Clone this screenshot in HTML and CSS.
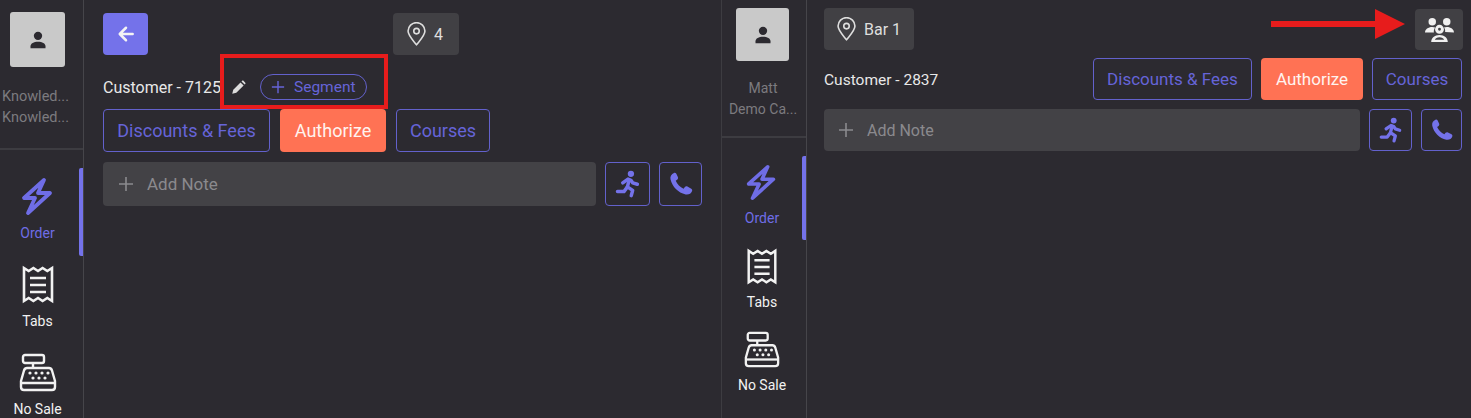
FILE: index.html
```html
<!DOCTYPE html>
<html lang="en">
<head>
    <meta charset="UTF-8">
    <meta name="viewport" content="width=device-width, initial-scale=1.0">
    <title>Order Screens</title>
    <link rel="stylesheet" href="styles.css">
</head>
<body>
    <svg class="icon-defs" aria-hidden="true">
        <symbol id="i-person" viewBox="0 0 24 24">
            <circle cx="12" cy="7" r="5"/>
            <path d="M3 22v-2.500c0-3.500 4-5.500 9-5.500s9 2 9 5.500V22z"/>
        </symbol>
        <symbol id="i-bolt" viewBox="0 0 40 40">
            <path d="M26 3 6 21h11l-7 15 22-20H20z" fill="none" stroke="currentColor" stroke-width="3.800" stroke-linejoin="round"/>
        </symbol>
        <symbol id="i-receipt" viewBox="0 0 40 40">
            <g fill="none" stroke="currentColor" stroke-width="2.600">
                <path d="M6 3v33l4.700-3 4.700 3 4.600-3 4.600 3 4.700-3 4.700 3V3l-4.700 3-4.700-3-4.600 3-4.600-3-4.700 3z"/>
                <path d="M12 13h16M12 20h16M12 27h16"/>
            </g>
        </symbol>
        <symbol id="i-register" viewBox="0 0 40 40">
            <g fill="none" stroke="currentColor" stroke-width="2.400" stroke-linejoin="round">
                <rect x="5" y="2" width="21" height="8" rx="2"/>
                <path d="M15 10v5"/>
                <path d="M9 15h22c1.500 0 2.500 1 3 2.500L37 28v6c0 2-1 3-3 3H6c-2 0-3-1-3-3v-6L6 17.500C6.500 16 7.500 15 9 15z"/>
                <path d="M3.500 30h33"/>
            </g>
            <g>
                <circle cx="12" cy="20" r="1.600"/><circle cx="18" cy="20" r="1.600"/><circle cx="24" cy="20" r="1.600"/><circle cx="30" cy="20" r="1.600"/>
                <circle cx="15" cy="25" r="1.600"/><circle cx="21" cy="25" r="1.600"/><circle cx="27" cy="25" r="1.600"/>
            </g>
        </symbol>
        <symbol id="i-back" viewBox="0 0 24 24">
            <path d="M20 12H5M12 4.500 4.500 12l7.500 7.500" fill="none" stroke="currentColor" stroke-width="3" stroke-linecap="round" stroke-linejoin="round"/>
        </symbol>
        <symbol id="i-pin" viewBox="3 1 18 22.500">
            <g fill="none" stroke="currentColor" stroke-width="1.500">
                <path d="M12 22.500C8 17.500 4 13.500 4 9.500a8 8 0 0 1 16 0c0 4-4 8-8 13z" stroke-linejoin="round"/>
                <circle cx="12" cy="9.500" r="2.600"/>
            </g>
        </symbol>
        <symbol id="i-pencil" viewBox="0 0 24 24">
            <path d="M2 22l1.600-6.500L15.200 3.900l5 5L8.500 20.400zM16.800 2.300l1-1c.7-.6 1.500-.6 2.100 0l2.900 2.900c.6.600.6 1.400 0 2.100l-1 1z"/>
        </symbol>
        <symbol id="i-plus" viewBox="0 0 16 16">
            <path d="M8 1v14M1 8h14" fill="none" stroke="currentColor" stroke-width="1.600"/>
        </symbol>
        <symbol id="i-run" viewBox="0 0 24 24">
            <circle cx="14.500" cy="3.300" r="2.700"/>
            <g fill="none" stroke="currentColor" stroke-width="3" stroke-linecap="round" stroke-linejoin="round">
                <path d="M7.500 11 12 7.800l2.500 1L16 11l4 1.200"/>
                <path d="M13 8.500l-1.500 6L16 17.500 14.800 22"/>
                <path d="M11.500 14.500 8.500 18.500H3"/>
            </g>
        </symbol>
        <symbol id="i-phone" viewBox="0 0 24 24">
            <path d="M6 2.500c-2.200.8-3.500 3-3 5.500 1.500 6.500 6.500 11.500 13 13 2.500.5 4.700-.8 5.500-3 .3-.8 0-1.600-.7-2l-3.300-1.800c-.8-.4-1.600-.2-2.200.4l-1.100 1.400c-3-1.300-5.400-3.700-6.700-6.700l1.400-1.100c.6-.6.8-1.400.4-2.200L8 3.200C7.600 2.500 6.800 2.200 6 2.500z"/>
        </symbol>
        <symbol id="i-people" viewBox="0 0 28 24">
            <circle cx="7" cy="4.600" r="3.600"/>
            <circle cx="21" cy="4.600" r="3.600"/>
            <path d="M0 15c0-3.300 3-5.500 7-5.500 1 0 1.900.2 2.700.5C8.600 11.800 8.300 13.500 8.600 15z"/>
            <path d="M28 15c0-3.300-3-5.500-7-5.500-1 0-1.900.2-2.700.5 1.100 1.300 1.400 3 1.100 4.500z"/>
            <path d="M14 7.500a4.300 4.300 0 1 1 0 8.600 4.300 4.300 0 0 1 0-8.600zm0 2.900a1.400 1.400 0 1 0 0 2.800 1.400 1.400 0 0 0 0-2.800z" fill-rule="evenodd"/>
            <path d="M6 24c0-4 3.200-6.800 8-6.800s8 2.800 8 6.800zm3.500-2h9c-.6-1.500-2.300-2.500-4.500-2.500s-3.900 1-4.500 2.500z" fill-rule="evenodd"/>
        </symbol>
    </svg>

    <div class="screen">
        <section class="panel panel-left">
            <aside class="sidebar">
                <div class="profile">
                    <div class="avatar"><svg class="avatar-icon"><use href="#i-person"/></svg></div>
                    <div class="staff">
                        <p>Knowled...</p>
                        <p>Knowled...</p>
                    </div>
                </div>
                <nav class="nav">
                    <a class="nav-item active"><svg class="nav-icon"><use href="#i-bolt"/></svg><span>Order</span></a>
                    <a class="nav-item"><svg class="nav-icon"><use href="#i-receipt"/></svg><span>Tabs</span></a>
                    <a class="nav-item"><svg class="nav-icon"><use href="#i-register"/></svg><span>No Sale</span></a>
                </nav>
            </aside>
            <main class="main">
                <div class="top-row">
                    <button class="back-btn"><svg class="back-icon"><use href="#i-back"/></svg></button>
                    <div class="chip chip-table"><svg class="pin-icon"><use href="#i-pin"/></svg><span>4</span></div>
                </div>
                <div class="customer-row">
                    <span class="customer">Customer - 7125</span>
                    <svg class="pencil-icon"><use href="#i-pencil"/></svg>
                    <button class="segment-btn"><svg class="segment-plus"><use href="#i-plus"/></svg>Segment</button>
                </div>
                <div class="actions">
                    <button class="btn outline btn-discounts">Discounts &amp; Fees</button>
                    <button class="btn solid btn-authorize">Authorize</button>
                    <button class="btn outline btn-courses">Courses</button>
                </div>
                <div class="note-row">
                    <div class="note"><svg class="note-plus"><use href="#i-plus"/></svg>Add Note</div>
                    <button class="btn outline square square-run"><svg class="square-icon"><use href="#i-run"/></svg></button>
                    <button class="btn outline square square-phone"><svg class="square-icon"><use href="#i-phone"/></svg></button>
                </div>
            </main>
            <div class="callout-box"></div>
        </section>

        <section class="panel panel-right">
            <aside class="sidebar">
                <div class="profile">
                    <div class="avatar"><svg class="avatar-icon"><use href="#i-person"/></svg></div>
                    <div class="staff">
                        <p>Matt</p>
                        <p>Demo Ca...</p>
                    </div>
                </div>
                <nav class="nav">
                    <a class="nav-item active"><svg class="nav-icon"><use href="#i-bolt"/></svg><span>Order</span></a>
                    <a class="nav-item"><svg class="nav-icon"><use href="#i-receipt"/></svg><span>Tabs</span></a>
                    <a class="nav-item"><svg class="nav-icon"><use href="#i-register"/></svg><span>No Sale</span></a>
                </nav>
            </aside>
            <main class="main">
                <div class="top-row top-row-split">
                    <div class="chip chip-bar"><svg class="pin-icon"><use href="#i-pin"/></svg><span>Bar 1</span></div>
                    <button class="chip people-btn"><svg class="people-icon"><use href="#i-people"/></svg></button>
                </div>
                <div class="customer-actions">
                    <span class="customer">Customer - 2837</span>
                    <div class="actions">
                        <button class="btn outline btn-discounts">Discounts &amp; Fees</button>
                        <button class="btn solid btn-authorize">Authorize</button>
                        <button class="btn outline btn-courses">Courses</button>
                    </div>
                </div>
                <div class="note-row">
                    <div class="note"><svg class="note-plus"><use href="#i-plus"/></svg>Add Note</div>
                    <button class="btn outline square square-run"><svg class="square-icon"><use href="#i-run"/></svg></button>
                    <button class="btn outline square square-phone"><svg class="square-icon"><use href="#i-phone"/></svg></button>
                </div>
            </main>
            <svg class="callout-arrow" viewBox="0 0 134 30"><path d="M0 12h104V0l30 15-30 15V18H0z"/></svg>
        </section>
    </div>
</body>
</html>
```

FILE: styles.css
```css
* {
    margin: 0;
    padding: 0;
    box-sizing: border-box;
}

body {
    font-family: 'Roboto', 'Liberation Sans', sans-serif;
    background-color: #2c2a30;
    color: #e6e6e6;
    height: 418px;
    overflow: hidden;
}

button {
    font-family: inherit;
    background: none;
    border: none;
}

svg {
    display: block;
    fill: currentColor;
}

.icon-defs {
    width: 0;
    height: 0;
    position: absolute;
}

.screen {
    display: flex;
    height: 418px;
}

.panel {
    display: flex;
    position: relative;
    height: 418px;
    overflow: hidden;
}

.panel-left {
    width: 722px;
    border-right: 1px solid #3d3c41;
}

.panel-right {
    width: 749px;
}

/* sidebar */
.sidebar {
    flex: none;
    border-right: 1px solid #46454a;
    overflow: hidden;
}

.profile {
    border-bottom: 2px solid #3d3c41;
}

.avatar {
    display: flex;
    align-items: center;
    justify-content: center;
    background-color: #c9c9c9;
    border-radius: 3px;
    color: #2c2a30;
}

.avatar-icon {
    width: 20px;
    height: 20px;
}

.staff {
    color: #7c7b7f;
    text-align: center;
    font-size: 14px;
    line-height: 21px;
    white-space: nowrap;
}

.nav-item {
    display: flex;
    flex-direction: column;
    align-items: center;
    position: relative;
    color: #f2f2f2;
    font-size: 14px;
    line-height: 20px;
}

.nav-item.active {
    color: #6f6de6;
}

.nav-item.active::after {
    content: "";
    position: absolute;
    top: 0;
    bottom: 0;
    right: 0;
    width: 4px;
    background-color: #7472ea;
    border-radius: 2px 0 0 2px;
}

.nav-icon {
    margin-bottom: 6px;
}

.panel-left .sidebar {
    width: 84px;
}

.panel-left .profile {
    height: 150px;
    padding: 12px 2px 0;
}

.panel-left .avatar {
    width: 55px;
    height: 55px;
    margin: 0 0 19px 8px;
}

.panel-left .staff {
    width: 67px;
    font-size: 14.500px;
}

.panel-left .nav {
    padding-top: 18px;
}

.panel-left .nav-item {
    height: 88px;
    padding-top: 9px;
    padding-right: 8px;
}

.panel-left .nav-icon {
    width: 40px;
    height: 40px;
}

.panel-right .sidebar {
    width: 85px;
}

.panel-right .profile {
    height: 138px;
    padding: 8px 7px 0 5px;
}

.panel-right .avatar {
    width: 53px;
    height: 53px;
    margin: 0 0 17px 9px;
}

.panel-right .nav {
    padding-top: 18px;
}

.panel-right .nav-item {
    height: 83.500px;
    padding-top: 8px;
    padding-right: 4px;
}

.panel-right .nav-icon {
    width: 38px;
    height: 38px;
}

/* main area */
.main {
    flex: 1;
    min-width: 0;
}

.panel-left .main {
    padding: 13px 19px 0 19px;
}

.panel-right .main {
    padding: 8px 8px 0 17px;
}

.top-row {
    display: flex;
    align-items: center;
}

.top-row-split {
    justify-content: space-between;
}

.back-btn {
    display: flex;
    align-items: center;
    justify-content: center;
    width: 45px;
    height: 42px;
    background-color: #7472ea;
    border-radius: 4px;
    color: #f4f4f4;
}

.back-icon {
    width: 20px;
    height: 20px;
}

.chip {
    display: flex;
    align-items: center;
    background-color: #414044;
    border-radius: 4px;
    color: #dedede;
}

.chip-table {
    width: 66px;
    height: 42px;
    margin-left: 245px;
    padding-left: 14px;
    gap: 8px;
    font-size: 16px;
}

.chip-bar {
    width: 90px;
    height: 42px;
    padding-left: 13px;
    gap: 8px;
    font-size: 16px;
}

.pin-icon {
    width: 19px;
    height: 24px;
}

.people-btn {
    justify-content: center;
    width: 48px;
    height: 41px;
}

.people-icon {
    width: 29px;
    height: 25px;
    color: #f0f0f0;
}

.customer {
    color: #e8e8e8;
    white-space: nowrap;
}

.panel-left .customer {
    font-size: 16px;
}

.panel-right .customer {
    font-size: 15.500px;
    padding-top: 2px;
}

.customer-row {
    display: flex;
    align-items: center;
    height: 26px;
    margin: 19px 0 9px;
}

.pencil-icon {
    width: 15px;
    height: 15px;
    margin-left: 10px;
    color: #dcdcdc;
}

.segment-btn {
    display: flex;
    align-items: center;
    gap: 9px;
    width: 107px;
    height: 26px;
    margin-left: 14px;
    padding-left: 10px;
    border: 1px solid #6361cc;
    border-radius: 13px;
    color: #6664d8;
    font-size: 15.500px;
}

.segment-plus {
    width: 14px;
    height: 14px;
}

.customer-actions {
    display: flex;
    align-items: center;
    justify-content: space-between;
    height: 42px;
    margin: 8px 1px 0 0;
}

.actions {
    display: flex;
}

.panel-left .actions {
    gap: 10px;
}

.panel-right .actions {
    gap: 9px;
}

.btn {
    height: 42px;
    border-radius: 4px;
    font-size: 17px;
    white-space: nowrap;
}

.panel-left .btn {
    height: 43px;
    font-size: 18px;
}

.btn.outline {
    border: 1px solid #6361cc;
    color: #6664d8;
}

.btn.solid {
    background-color: #ff7254;
    color: #fff3ef;
}

.panel-left .btn-discounts { width: 167px; }
.panel-left .btn-authorize { width: 106px; }
.panel-left .btn-courses { width: 94px; }
.panel-right .btn-discounts { width: 159px; }
.panel-right .btn-authorize { width: 102px; }
.panel-right .btn-courses { width: 90px; }

.note-row {
    display: flex;
    align-items: center;
}

.panel-left .note-row {
    margin-top: 10px;
    gap: 9px;
}

.panel-right .note-row {
    margin: 9px 1px 0 0;
    gap: 9px;
}

.note {
    display: flex;
    align-items: center;
    flex: 1;
    background-color: #434246;
    border-radius: 4px;
    color: #8b8a8e;
}

.panel-left .note {
    height: 44px;
    padding-left: 15px;
    gap: 13px;
    font-size: 17px;
}

.panel-right .note {
    height: 42px;
    padding-left: 14px;
    gap: 13px;
    font-size: 16px;
}

.note-plus {
    width: 16px;
    height: 16px;
}

.square {
    display: flex;
    align-items: center;
    justify-content: center;
}

.panel-left .square { height: 44px; }
.panel-right .square { height: 42px; }
.panel-left .square-run { width: 45px; }
.panel-left .square-phone { width: 43px; }
.panel-right .square-run { width: 43px; }
.panel-right .square-phone { width: 41px; }

.square-icon {
    width: 28px;
    height: 28px;
    flex: none;
    color: #7472ea;
}

.panel-right .square-icon {
    width: 26px;
    height: 26px;
}

/* red annotations drawn over the screenshot */
.callout-box {
    position: absolute;
    left: 220px;
    top: 54px;
    width: 168px;
    height: 55px;
    border: 4px solid #e71c1c;
}

.callout-arrow {
    position: absolute;
    left: 549px;
    top: 9px;
    width: 134px;
    height: 30px;
    color: #e71c1c;
}
```
